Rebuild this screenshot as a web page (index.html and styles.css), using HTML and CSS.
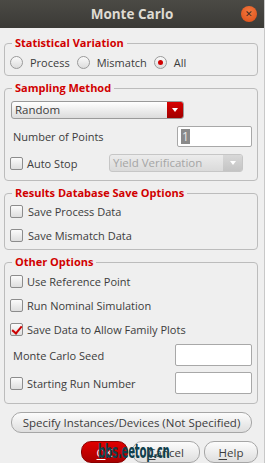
FILE: index.html
```html
<!DOCTYPE html>
<html lang="en">
<head>
    <meta charset="UTF-8">
    <meta name="viewport" content="width=device-width, initial-scale=1.0">
    <title>Monte Carlo</title>
    <link rel="stylesheet" href="styles.css">
</head>
<body>
    <div class="window">
        <div class="titlebar">
            <span></span>
            <span class="title">Monte Carlo</span>
            <span class="close">&#x2715;</span>
        </div>

        <div class="content">
            <fieldset class="group">
                <legend>Statistical Variation</legend>
                <div class="radio-row">
                    <label class="opt"><span class="radio"></span>Process</label>
                    <label class="opt"><span class="radio"></span>Mismatch</label>
                    <label class="opt"><span class="radio on"></span>All</label>
                </div>
            </fieldset>

            <fieldset class="group sampling">
                <legend>Sampling Method</legend>
                <div class="combo">
                    <span class="combo-text">Random</span>
                    <span class="combo-arrow"></span>
                </div>
                <div class="field-row">
                    <span class="label">Number of Points</span>
                    <span class="entry points"><span class="sel">1</span></span>
                </div>
                <div class="field-row">
                    <label class="opt"><span class="check"></span>Auto Stop</label>
                    <div class="combo disabled">
                        <span class="combo-text">Yield Verification</span>
                        <span class="combo-arrow"></span>
                    </div>
                </div>
            </fieldset>

            <fieldset class="group results">
                <legend>Results Database Save Options</legend>
                <label class="opt"><span class="check"></span>Save Process Data</label>
                <label class="opt"><span class="check"></span>Save Mismatch Data</label>
            </fieldset>

            <fieldset class="group other">
                <legend>Other Options</legend>
                <label class="opt"><span class="check"></span>Use Reference Point</label>
                <label class="opt"><span class="check"></span>Run Nominal Simulation</label>
                <label class="opt"><span class="check on"></span>Save Data to Allow Family Plots</label>
                <div class="field-row">
                    <span class="label">Monte Carlo Seed</span>
                    <span class="entry"></span>
                </div>
                <div class="field-row">
                    <label class="opt"><span class="check"></span>Starting Run Number</label>
                    <span class="entry"></span>
                </div>
            </fieldset>

            <button class="btn wide">Specify Instances/Devices (Not Specified)</button>

            <div class="actions">
                <button class="btn ok"><u>O</u>K</button>
                <button class="btn cancel"><u>C</u>ancel</button>
                <button class="btn help"><u>H</u>elp</button>
                <span class="watermark">bbs.eetop.cn</span>
            </div>
        </div>
    </div>
</body>
</html>
```

FILE: styles.css
```css
:root {
    --bg: #efefef;
    --text: #3c3c3c;
    --red: #d10000;
    --border: #bcbcbc;
}

body {
    margin: 0;
    font-family: 'Open Sans', 'Noto Sans', sans-serif;
    font-size: 11px;
    color: var(--text);
    background: var(--bg);
    width: 265px;
    height: 463px;
    overflow: hidden;
}

.window {
    height: 463px;
    border-right: 1px solid #c8c8c8;
    box-sizing: border-box;
}

/* title bar */
.titlebar {
    height: 28px;
    display: grid;
    grid-template-columns: 1fr auto 1fr;
    align-items: center;
    background: linear-gradient(#4b4a45, #3b3a36);
    color: #dfdbd2;
}

.title {
    font-weight: bold;
    font-size: 13.5px;
}

.close {
    justify-self: end;
    margin-right: 7px;
    width: 16px;
    height: 16px;
    border-radius: 50%;
    background: radial-gradient(circle at 50% 35%, #f4793f, #db4d16);
    color: #3a2a20;
    font-size: 9px;
    line-height: 16px;
    text-align: center;
}

.content {
    padding: 8px 6px 0 4px;
}

/* group boxes */
.group {
    margin: 0 0 5px;
    padding: 2px 5px 3px;
    border: 1px solid var(--border);
    border-radius: 4px;
}

.group legend {
    margin-left: 2px;
    padding: 0 3px;
    color: var(--red);
    font-weight: bold;
    font-size: 11px;
    line-height: 14px;
}

.opt {
    display: flex;
    align-items: center;
    gap: 4px;
    height: 18px;
}

.radio-row {
    display: flex;
    gap: 7px;
    height: 20px;
    align-items: center;
}

.radio-row .opt {
    gap: 7px;
}

.radio {
    width: 11px;
    height: 11px;
    border: 1px solid #9a9a9a;
    border-radius: 50%;
    background: linear-gradient(#fafafa, #dcdcdc);
    display: flex;
    align-items: center;
    justify-content: center;
}

.radio.on::after {
    content: "";
    width: 5px;
    height: 5px;
    border-radius: 50%;
    background: #d00000;
}

.check {
    width: 11px;
    height: 11px;
    border: 1px solid #8c8c8c;
    border-radius: 2px;
    background: linear-gradient(#fbfbfb, #dedede);
    position: relative;
    flex: none;
}

.check.on::after {
    content: "";
    position: absolute;
    left: 3px;
    top: 0;
    width: 4px;
    height: 8px;
    border: solid #cc0000;
    border-width: 0 2.5px 2.5px 0;
    transform: rotate(40deg);
}

/* sampling */
.sampling {
    display: flex;
    flex-direction: column;
    gap: 7px;
    padding: 6px 5px 8px;
}

.combo {
    display: flex;
    width: 173px;
    height: 18px;
    box-sizing: border-box;
    border: 1px solid #9a9a9a;
    border-radius: 3px;
    background: linear-gradient(#ffffff, #dcdcdc);
    overflow: hidden;
    margin-left: 1px;
}

.combo-text {
    flex: 1;
    padding-left: 3px;
    line-height: 16px;
    font-size: 11.5px;
}

.combo-arrow {
    width: 16px;
    background: linear-gradient(#d80000, #a00000);
    display: flex;
    align-items: center;
    justify-content: center;
}

.combo-arrow::after {
    content: "";
    border: 3px solid transparent;
    border-top: 4px solid #fff;
    margin-top: 3px;
}

.combo.disabled {
    width: 134px;
    height: 18px;
    margin-left: 0;
    border-color: #c6c6c6;
    background: linear-gradient(#ececec, #dadada);
}

.combo.disabled .combo-text {
    color: #a5a5a5;
}

.combo.disabled .combo-arrow {
    width: 19px;
    background: linear-gradient(#d8d8d8, #c4c4c4);
}

.field-row {
    display: flex;
    align-items: center;
    justify-content: space-between;
}

.label {
    padding-left: 3px;
}

.entry {
    width: 77px;
    height: 22px;
    box-sizing: border-box;
    border: 1px solid #a8a8a8;
    border-radius: 2px;
    background: #fff;
    display: flex;
    align-items: center;
    padding-left: 3px;
}

.entry.points {
    width: 75px;
    height: 21px;
}

.sel {
    background: #8a8a8a;
    color: #e8e8e8;
    font-size: 12px;
    line-height: 15px;
    padding: 0 1px;
}

.sampling .field-row .combo {
    margin-right: 9px;
}

/* results */
.results {
    display: flex;
    flex-direction: column;
    gap: 6px;
    padding: 2px 5px 5px;
}

.results .opt {
    gap: 5px;
}

.other {
    display: flex;
    flex-direction: column;
    gap: 6px;
    padding: 3px 5px 9px;
    margin-bottom: 8px;
}

/* buttons */
.btn {
    font-family: inherit;
    font-size: 11.5px;
    color: var(--text);
    border: 1px solid #a6a6a6;
    border-radius: 10px;
    background: linear-gradient(#fcfcfc, #dedede);
    height: 22px;
    padding: 0;
}

.btn u {
    text-underline-offset: 2px;
}

.wide {
    display: block;
    width: 241px;
    height: 21px;
    margin: 0 0 8px 7px;
}

.actions {
    display: flex;
    justify-content: flex-end;
    gap: 4px;
    position: relative;
}

.ok {
    width: 47px;
    background: linear-gradient(#e00000, #a80000);
    border-color: #8a0000;
    color: #fff;
}

.cancel {
    width: 68px;
}

.help {
    width: 54px;
}

.watermark {
    position: absolute;
    left: 94px;
    top: -1px;
    font-family: 'DejaVu Sans Condensed', 'DejaVu Sans', sans-serif;
    font-weight: bold;
    font-size: 19px;
    color: #0f3f4c;
    letter-spacing: -0.5px;
    transform: scaleX(0.6);
    transform-origin: left center;
}
```
